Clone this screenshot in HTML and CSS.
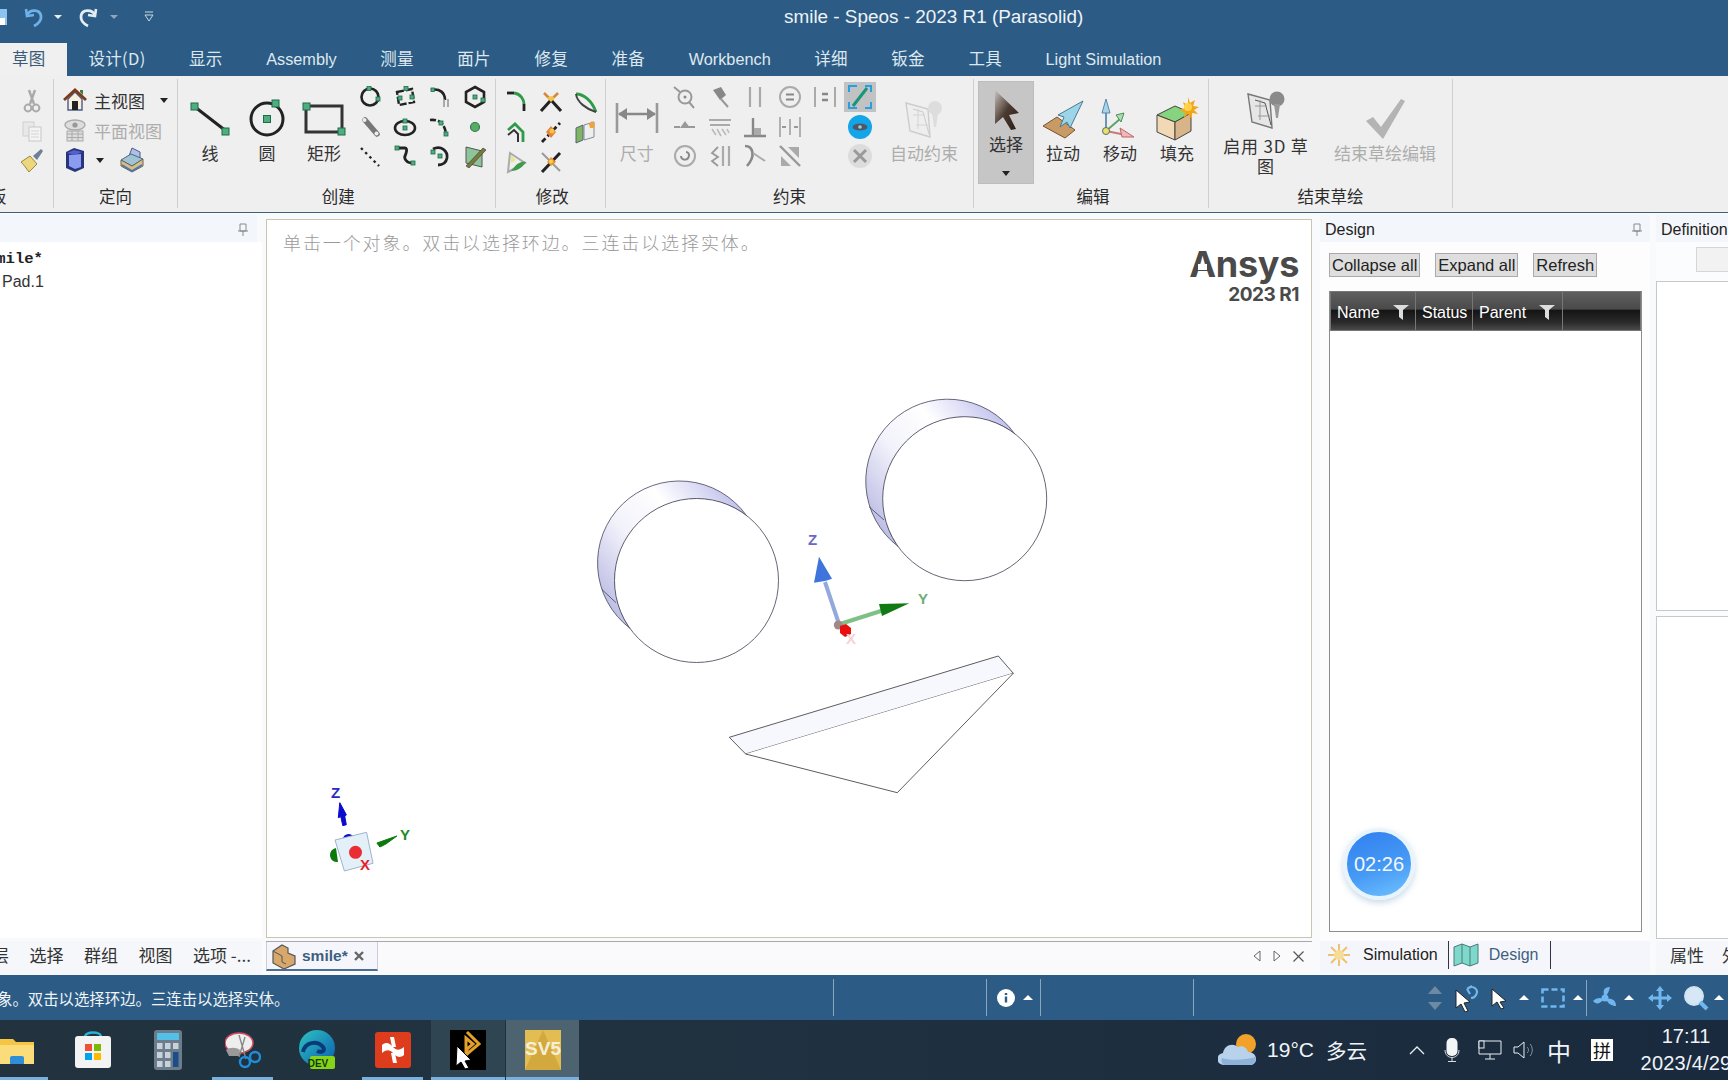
FILE: index.html
```html
<!DOCTYPE html>
<html lang="zh">
<head>
<meta charset="utf-8">
<title>smile - Speos - 2023 R1 (Parasolid)</title>
<link rel="stylesheet" href="styles.css">
</head>
<body>
<div class="app">
  <header class="titlebar">
    <div class="qat">
      <svg class="q-save" width="8" height="20" viewBox="0 0 8 20"><rect x="-8" y="2" width="15" height="16" fill="#8cc4f0"/><rect x="-2" y="11" width="7" height="7" fill="#fff"/></svg>
      <svg class="q-undo" width="24" height="24" viewBox="0 0 24 24"><path d="M4 4l1 7 7-1" fill="none" stroke="#6fb2ea" stroke-width="2.6"/><path d="M5 10c3-6 13-6 14 1 .5 5-3 8-7 10" fill="none" stroke="#6fb2ea" stroke-width="2.8"/></svg>
      <span class="q-tri"></span>
      <svg class="q-redo" width="24" height="24" viewBox="0 0 24 24"><path d="M20 4l-1 7-7-1" fill="none" stroke="#e4edf4" stroke-width="2.6"/><path d="M19 10c-3-6-13-6-14 1-.5 5 3 8 7 10" fill="none" stroke="#e4edf4" stroke-width="2.8"/></svg>
      <span class="q-tri dim"></span>
      <svg class="q-cust" width="10" height="12" viewBox="0 0 10 12"><path d="M1 1h8M1 4h8l-4 6z" fill="none" stroke="#c9d6e2" stroke-width="1"/></svg>
    </div>
    <div class="title">smile - Speos - 2023 R1 (Parasolid)</div>
  </header>

  <nav class="tabs">
    <span class="tab active">草图</span>
    <span class="tab t1">设计(D)</span>
    <span class="tab">显示</span>
    <span class="tab lat">Assembly</span>
    <span class="tab">测量</span>
    <span class="tab">面片</span>
    <span class="tab">修复</span>
    <span class="tab">准备</span>
    <span class="tab lat">Workbench</span>
    <span class="tab">详细</span>
    <span class="tab">钣金</span>
    <span class="tab">工具</span>
    <span class="tab lat">Light Simulation</span>
  </nav>

  <section class="ribbon">
    <div class="grp g-clip">
      <div class="g-body clip-col">
        <svg width="24" height="30" viewBox="0 0 24 30"><path d="M9 4l5 14M15 4l-5 14" stroke="#aaa" stroke-width="2.4" fill="none"/><circle cx="8" cy="22" r="3.4" fill="none" stroke="#aaa" stroke-width="2"/><circle cx="16" cy="22" r="3.4" fill="none" stroke="#aaa" stroke-width="2"/></svg>
        <svg width="24" height="30" viewBox="0 0 24 30"><rect x="3" y="6" width="11" height="14" fill="#e8e8e8" stroke="#d0d0d0"/><rect x="9" y="11" width="12" height="14" fill="#f4f4f4" stroke="#c8c8c8"/><path d="M11 15h8M11 18h8M11 21h8" stroke="#d4d4d4"/></svg>
        <svg width="24" height="30" viewBox="0 0 24 30"><path d="M1 16l9-6 7 8-8 8c-3-4-5-7-8-10z" fill="#ecd67e" stroke="#9a8740"/><path d="M13 10l8-7 2 2-6 9z" fill="#6f7f96"/></svg>
      </div>
      <div class="g-label clip-label">剪贴板</div>
    </div>

    <div class="grp g-orient">
      <div class="g-body orient">
        <div class="o-row">
          <svg width="24" height="24" viewBox="0 0 24 24"><path d="M5 11v11h14V11L12 4z" fill="#f6f0dc" stroke="#4a5a8c" stroke-width="1.400"/><path d="M1 12L12 2l11 10" fill="none" stroke="#7c3a1a" stroke-width="2.800"/><path d="M17 2h3v5l-3-3z" fill="#3f7a3a"/><rect x="9" y="13" width="6" height="9" fill="#222"/></svg>
          <span class="o-t">主视图</span><span class="tri o-tri"></span>
        </div>
        <div class="o-row gray">
          <svg width="24" height="24" viewBox="0 0 24 24"><ellipse cx="12" cy="7" rx="10" ry="5" fill="#ddd" stroke="#aaa" stroke-width="1.4"/><circle cx="12" cy="7" r="2.6" fill="#999"/><rect x="4" y="13" width="16" height="10" fill="#ddd" stroke="#aaa"/><path d="M4 16h16M4 19.500h16M9 13v10M15 13v10" stroke="#aaa"/></svg>
          <span class="o-t">平面视图</span>
        </div>
        <div class="o-row">
          <svg width="24" height="26" viewBox="0 0 24 26"><path d="M3 5l8-4 10 3v17l-9 4-9-4z" fill="#27347e"/><path d="M6 8l12-1v13l-6 2-6-3z" fill="#8b9cf0"/><path d="M4 6l7-3 8 2-7 3z" fill="#5262c8"/></svg>
          <span class="tri o-tri2"></span>
          <svg class="o-view" width="26" height="28" viewBox="0 0 26 28"><path d="M10 10l3-8 8 4v10l-11 0z" fill="#aebfe8" stroke="#4a5a90"/><path d="M2 14l10-6 12 5-11 7z" fill="#9fc4d8" stroke="#567"/><path d="M2 14v6l11 6 11-6v-7l-11 7z" fill="#d8bc8a" stroke="#665"/><path d="M3 19l10 6 10-6" fill="none" stroke="#4a78a8" stroke-width="1.600"/></svg>
        </div>
      </div>
      <div class="g-label">定向</div>
    </div>

    <div class="grp g-create">
      <div class="g-body row">
        <div class="big w57"><div class="bi"><svg width="44" height="44" viewBox="0 0 44 44"><path d="M7 10l31 24" stroke="#222" stroke-width="3"/><rect class="h7" x="3" y="6" width="7" height="7"/><rect class="h7" x="34" y="31" width="7" height="7"/></svg></div><span>线</span></div>
        <div class="big w57"><div class="bi"><svg width="44" height="44" viewBox="0 0 44 44"><circle cx="22" cy="22" r="16" fill="none" stroke="#222" stroke-width="3"/><rect class="h7" x="18.500" y="18.500" width="7" height="7"/><rect class="h7" x="27" y="3" width="7" height="7"/></svg></div><span>圆</span></div>
        <div class="big w57"><div class="bi"><svg width="44" height="44" viewBox="0 0 44 44"><rect x="4" y="9" width="36" height="26" fill="none" stroke="#333" stroke-width="3"/><rect class="h7" x="1" y="6" width="7" height="7"/><rect class="h7" x="36" y="31" width="7" height="7"/></svg></div><span>矩形</span></div>
        <div class="grid c4">
          <svg class="ic" viewBox="0 0 24 24"><circle cx="12" cy="12" r="8.500" fill="none" stroke="#222" stroke-width="2.600"/><rect class="h" x="9" y="1.500" width="4" height="4"/><rect class="h" x="18" y="12" width="4" height="4"/></svg>
          <svg class="ic" viewBox="0 0 24 24"><path d="M4 7l15-3 2 13-15 3z" fill="none" stroke="#222" stroke-width="2.400" stroke-dasharray="7 2"/><rect class="h" x="11" y="1.500" width="4" height="4"/><rect class="h" x="5" y="11" width="4" height="4"/><rect class="h" x="17" y="10" width="4" height="4"/></svg>
          <svg class="ic" viewBox="0 0 24 24"><path d="M3 5c9-2 14 3 14 10" fill="none" stroke="#222" stroke-width="2.600"/><path d="M16 14v8M20 14v8" stroke="#999" stroke-width="1.600"/><rect class="h" x="3" y="3" width="3.500" height="3.500"/></svg>
          <svg class="ic" viewBox="0 0 24 24"><path d="M12 2l9 5v10l-9 5-9-5V7z" fill="none" stroke="#222" stroke-width="2.600"/><rect class="h" x="10" y="10" width="4" height="4"/><rect class="h" x="18" y="13" width="4" height="4"/></svg>
          <svg class="ic" viewBox="0 0 24 24"><path d="M7 5l12 14" stroke="#777" stroke-width="5.500" stroke-linecap="round"/><circle cx="18.500" cy="18.500" r="2" fill="#eee"/><circle cx="6.500" cy="5" r="2" fill="#eee"/></svg>
          <svg class="ic" viewBox="0 0 24 24"><ellipse cx="12" cy="13" rx="10" ry="7" fill="none" stroke="#222" stroke-width="2.600"/><rect class="h" x="10" y="11" width="4" height="4"/><rect class="h" x="10" y="4" width="4" height="4"/></svg>
          <svg class="ic" viewBox="0 0 24 24"><path d="M2 5c9-1 14 3 16 13" fill="none" stroke="#222" stroke-width="2.600" stroke-dasharray="6 2"/><rect class="h" x="11" y="6" width="4" height="4"/><rect class="h" x="16" y="17" width="4" height="4"/></svg>
          <svg class="ic" viewBox="0 0 24 24"><circle cx="12" cy="12" r="4.500" fill="#5cab62" stroke="#2d7c5c" stroke-width="1.200"/></svg>
          <svg class="ic" viewBox="0 0 24 24"><path d="M3 4l18 18" stroke="#222" stroke-width="2.400" stroke-dasharray="2.500 3.500"/></svg>
          <svg class="ic" viewBox="0 0 24 24"><path d="M4 4h8c3 0 1 6 0 8s1 7 7 7" fill="none" stroke="#222" stroke-width="2.800"/><rect class="h" x="2" y="2" width="4" height="4"/><rect class="h" x="18" y="17" width="4" height="4"/></svg>
          <svg class="ic" viewBox="0 0 24 24"><path d="M5 5c8-4 15 2 14 9-1 5-5 7-9 7" fill="none" stroke="#222" stroke-width="2.800"/><rect class="h" x="3" y="6" width="4" height="4"/><rect class="h" x="10" y="10" width="4" height="4"/></svg>
          <svg class="ic" viewBox="0 0 24 24"><path d="M3 3l16 4v16L3 19z" fill="#8ec49a" stroke="#555"/><path d="M3 22L20 4l3 2L6 24z" fill="#7a7a3a" stroke="#333" stroke-width=".6"/></svg>
        </div>
      </div>
      <div class="g-label">创建</div>
    </div>

    <div class="grp g-mod">
      <div class="g-body">
        <div class="grid c3 r30">
          <svg class="ic" viewBox="0 0 24 24"><path d="M2 3h7" stroke="#222" stroke-width="2.800"/><path d="M9 3c7 1 10 7 10 11" fill="none" stroke="#2f9b4a" stroke-width="2.800"/><path d="M19 14v7" stroke="#222" stroke-width="2.800"/></svg>
          <svg class="ic" viewBox="0 0 24 24"><path d="M2 21l10-11 10 11" fill="none" stroke="#222" stroke-width="3"/><path d="M5 3l7 7 7-7" fill="none" stroke="#d8873b" stroke-width="2.600"/><path d="M8 8l4 4 4-4-4-2z" fill="#f4c44a"/></svg>
          <svg class="ic" viewBox="0 0 24 24"><path d="M2 4c8 0 16 7 20 18" fill="none" stroke="#2f9b4a" stroke-width="2.800"/><path d="M2 4c1 8 10 15 20 18" fill="none" stroke="#444" stroke-width="2"/></svg>
          <svg class="ic" viewBox="0 0 24 24"><path d="M3 10l7-6 8 8v10" fill="none" stroke="#2f9b4a" stroke-width="2.800"/><path d="M3 15l6-5 4 4v8" fill="none" stroke="#333" stroke-width="2"/></svg>
          <svg class="ic" viewBox="0 0 24 24"><path d="M3 22L21 3" stroke="#222" stroke-width="2.800" stroke-dasharray="5 3"/><path d="M7 12l5 6 5-6-5-6z" fill="#e6823a"/><circle cx="13" cy="11" r="2.500" fill="#f4c44a"/></svg>
          <svg class="ic" viewBox="0 0 24 24"><path d="M2 8l7-3v15l-7 3z" fill="#7fb563" stroke="#567"/><path d="M10 5l10-3v15l-10 3z" fill="#eee" stroke="#889"/><path d="M15 4l3-3 3 3-1 4-4 0z" fill="#eda43c"/></svg>
          <svg class="ic" viewBox="0 0 24 24"><path d="M5 3l15 10L3 22z" fill="none" stroke="#aaa" stroke-width="2"/><path d="M6 5l5 5-5 3z" fill="#e8e68a"/><path d="M6 21c6-8 10-10 15-9-4 6-9 9-15 9z" fill="#3f9b4c"/></svg>
          <svg class="ic" viewBox="0 0 24 24"><path d="M3 22L21 3" stroke="#222" stroke-width="3"/><path d="M3 3l18 18" stroke="#999" stroke-width="2"/><path d="M8 12l4-5 5 5-5 4z" fill="#ef8e30"/><circle cx="12" cy="11.500" r="2" fill="#f6d34a"/></svg>
        </div>
      </div>
      <div class="g-label">修改</div>
    </div>

    <div class="grp g-cons">
      <div class="g-body row">
        <div class="big w61 gray"><div class="bi"><svg width="44" height="44" viewBox="0 0 44 44"><path d="M2 6v30M42 6v30" stroke="#999" stroke-width="2.600"/><path d="M4 17h36" stroke="#888" stroke-width="2.600"/><path d="M3 17l9-6v12zM41 17l-9-6v12z" fill="#888"/></svg></div><span>尺寸</span></div>
        <div class="grid c6 cons">
          <svg class="ic" viewBox="0 0 24 24"><circle cx="12" cy="12" r="6.500" fill="none" stroke="#999" stroke-width="2"/><circle cx="12" cy="12" r="1.500" fill="#888"/><path d="M1 2l6 5M16 17l5 6" stroke="#999" stroke-width="2"/></svg>
          <svg class="ic" viewBox="0 0 24 24"><path d="M5 5l8-3 5 8-6 5z" fill="#888"/><path d="M13 14l7 8" stroke="#999" stroke-width="2"/></svg>
          <svg class="ic" viewBox="0 0 24 24"><path d="M7 2v20M17 2v20" stroke="#aaa" stroke-width="2.200"/></svg>
          <svg class="ic" viewBox="0 0 24 24"><circle cx="12" cy="12" r="10" fill="none" stroke="#aaa" stroke-width="2"/><path d="M8 9.500h8M8 14.500h8" stroke="#888" stroke-width="2.200"/></svg>
          <svg class="ic" viewBox="0 0 24 24"><path d="M2 2v20M22 2v20" stroke="#aaa" stroke-width="2"/><path d="M9 9h6M9 15h6" stroke="#888" stroke-width="2.400"/></svg>
          <svg class="ic act" viewBox="0 0 32 30"><rect width="32" height="30" fill="#c1c2c4"/><path d="M5 10V4h8M27 10V4h-6M5 20v6h8M27 20v6h-6" fill="none" stroke="#2a9fe0" stroke-width="2"/><path d="M9 24L23 6" stroke="#17967a" stroke-width="3"/></svg>

          <svg class="ic" viewBox="0 0 24 24"><path d="M1 12h22" stroke="#999" stroke-width="2" stroke-dasharray="6 3 12 3"/><path d="M12 6l5 7H7z" fill="#999"/></svg>
          <svg class="ic" viewBox="0 0 24 24"><path d="M1 5h22M2 10h20" stroke="#aaa" stroke-width="2.200"/><path d="M4 14l4 6M9 14l4 7M14 14l4 6M19 14l2 4" stroke="#bbb" stroke-width="1.600"/></svg>
          <svg class="ic" viewBox="0 0 24 24"><path d="M1 21h22M10 3v18" stroke="#888" stroke-width="2.400"/><rect x="11" y="13" width="7" height="7" fill="#aaa"/></svg>
          <svg class="ic" viewBox="0 0 24 24"><path d="M2 2v20M22 2v20M12 4v16" stroke="#aaa" stroke-width="1.800"/><path d="M4 12h4M16 12h4" stroke="#999" stroke-width="1.800"/></svg>
          <span class="ic"></span>
          <svg class="ic" viewBox="0 0 24 24"><circle cx="12" cy="12" r="12" fill="#12a6e8"/><ellipse cx="12" cy="12" rx="7.500" ry="3.600" fill="#4d5966"/><circle cx="12" cy="12" r="1.800" fill="#b4c4d4"/></svg>

          <svg class="ic" viewBox="0 0 24 24"><circle cx="12" cy="12" r="10" fill="none" stroke="#aaa" stroke-width="2"/><path d="M8 12c0 5 8 5 8-1 0-2-2-3-3-3" fill="none" stroke="#888" stroke-width="2"/></svg>
          <svg class="ic" viewBox="0 0 24 24"><path d="M15 2v20M21 2v20" stroke="#aaa" stroke-width="2.200"/><path d="M10 3L4 9l6 4-6 4 6 5" fill="none" stroke="#999" stroke-width="1.800"/></svg>
          <svg class="ic" viewBox="0 0 24 24"><path d="M2 2c8 0 11 10 2 20" fill="none" stroke="#888" stroke-width="2.600"/><path d="M10 9l12 8" stroke="#aaa" stroke-width="2"/></svg>
          <svg class="ic" viewBox="0 0 24 24"><path d="M2 2l20 20" stroke="#999" stroke-width="2.400"/><path d="M10 3h11v11zM3 12v10h10z" fill="#aaa"/></svg>
          <span class="ic"></span>
          <svg class="ic" viewBox="0 0 24 24"><circle cx="12" cy="12" r="12" fill="#dcdcdc"/><path d="M6 6l12 12M18 6L6 18" stroke="#999" stroke-width="3"/></svg>
        </div>
        <div class="big w93 gray"><div class="bi"><svg width="44" height="44" viewBox="0 0 44 44"><path d="M4 6l22 6 2 28L8 34z" fill="#eee" stroke="#ccc" stroke-width="1.400"/><path d="M11 12l10 3 6 22" fill="none" stroke="#ccc"/><path d="M11 18h12M14 28h12M16 12v20" stroke="#d4d4d4"/><circle cx="33" cy="11" r="7" fill="#ddd"/><path d="M30 16h6l-2 14h-2z" fill="#ddd"/></svg></div><span>自动约束</span></div>
      </div>
      <div class="g-label">约束</div>
    </div>

    <div class="grp g-edit">
      <div class="g-body row">
        <div class="sel">
          <svg width="34" height="42" viewBox="0 0 34 42"><defs><linearGradient id="arw" x1="0" y1="0" x2="1" y2="1"><stop offset="0" stop-color="#c9c3bd"/><stop offset=".5" stop-color="#4a3a30"/><stop offset="1" stop-color="#2a1a14"/></linearGradient></defs><path d="M6 1l24 23-10 2 7 14-5 1-8-13-8 7z" fill="url(#arw)"/></svg>
          <span>选择</span>
          <i class="tri"></i>
        </div>
        <div class="big w57"><div class="bi"><svg width="44" height="44" viewBox="0 0 44 44"><path d="M2 29l14-9 18 13-10 8z" fill="#c89a66" stroke="#77532d"/><path d="M42 4L17 18l6 2-4 10 7-5 3 6z" fill="#9cd4e8" stroke="#4a7b92"/></svg></div><span>拉动</span></div>
        <div class="big w57"><div class="bi"><svg width="44" height="44" viewBox="0 0 44 44"><path d="M8 34V12" stroke="#6a95b8" stroke-width="2"/><path d="M8 2l-4 14h8z" fill="#a8d4e8" stroke="#5a87a8"/><path d="M8 34l14-12" stroke="#5fa36a" stroke-width="2"/><path d="M26 16l-8 2 5 7z" fill="#a7e0ae" stroke="#4c8f5a"/><path d="M8 34l20 4" stroke="#c77" stroke-width="2"/><path d="M36 40l-14-9 2 9z" fill="#f0b8bc" stroke="#b66"/><circle cx="8" cy="34" r="3.500" fill="#e6e26a" stroke="#666"/></svg></div><span>移动</span></div>
        <div class="big w57"><div class="bi"><svg width="44" height="44" viewBox="0 0 44 44"><path d="M2 18l18-9 16 7-16 9z" fill="#86d47d" stroke="#444"/><path d="M2 18v17l18 8V25z" fill="#f0d9b4" stroke="#444"/><path d="M20 25v18l16-9V16z" fill="#d8b489" stroke="#444"/><path d="M33 0l2 6 5-3-2 6 6 1-5 3 4 4-6-1v6l-4-5-4 4 1-6-6-2 6-2-2-6 5 3z" fill="#f2a516"/><circle cx="33" cy="10" r="4" fill="#ffd24a"/></svg></div><span>填充</span></div>
      </div>
      <div class="g-label">编辑</div>
    </div>

    <div class="grp g-end">
      <div class="g-body row">
        <div class="big w114 two"><div class="bi"><svg width="44" height="44" viewBox="0 0 44 44"><path d="M4 6l22 6 2 28L8 34z" fill="#e6e6e6" stroke="#777" stroke-width="1.400"/><path d="M11 12l10 3 6 22" fill="none" stroke="#555"/><path d="M11 18h12M14 28h12M16 12v20" stroke="#999"/><circle cx="33" cy="11" r="7.500" fill="#8a8a8a"/><path d="M30 16h6l-2 14h-2z" fill="#999"/></svg></div><span>启用 3D 草<br>图</span></div>
        <div class="big w124 gray"><div class="bi"><svg width="44" height="44" viewBox="0 0 44 44"><path d="M3 24l7-4 8 10L38 2l4 2-22 38z" fill="#b4b4b4"/></svg></div><span>结束草绘编辑</span></div>
      </div>
      <div class="g-label">结束草绘</div>
    </div>
  </section>

  <main class="main">
    <aside class="col left">
      <div class="phead"><span></span><svg class="pin" width="12" height="14" viewBox="0 0 12 14"><path d="M3 1h6v7H3zM1 8h10M6 8v5" fill="none" stroke="#888"/></svg></div>
      <div class="tree">
        <div class="t-root">smile*</div>
        <div class="t-pad">Pad.1</div>
      </div>
      <div class="strip l-strip"><span class="cut">图层</span><span>选择</span><span>群组</span><span>视图</span><span>选项 -...</span></div>
    </aside>

    <section class="col center">
      <div class="viewport">
        <svg class="scene" width="1044" height="717" viewBox="267 220 1044 717">
          <defs>
            <linearGradient id="cres" x1="1" y1=".1" x2="0" y2=".9"><stop offset="0" stop-color="#b4b4e6"/><stop offset=".18" stop-color="#dcdcf6"/><stop offset=".36" stop-color="#fff"/><stop offset=".62" stop-color="#f2f2fb"/><stop offset="1" stop-color="#b2b2e0"/></linearGradient>
          </defs>
          <g fill="url(#cres)" stroke="#44445a" stroke-width=".8">
            <path d="M746.400 515.500A82 82 0 1 0 630.100 628.400A82 82 0 0 1 746.400 515.500z"/>
            <path d="M1014.600 433.700A82 82 0 1 0 898.300 546.600A82 82 0 0 1 1014.600 433.700z"/>
          </g>
          <g fill="#fff" stroke="#3e3e50" stroke-width=".8">
            <circle cx="696.500" cy="580.500" r="82"/>
            <circle cx="964.700" cy="498.700" r="82"/>
          </g>
          <path d="M601.700 589.300L616 602.700M869 506.700L884 520" stroke="#44445a" stroke-width=".8" fill="none"/>
          <path d="M729.300 737.300L998.300 656 1013.300 673.300 745.700 754z" fill="#f7f7fe" stroke="#333" stroke-width=".8"/>
          <path d="M745.700 754L897.300 792.700 1013.300 673.300" fill="#fff" stroke="#333" stroke-width=".8"/>

          <path d="M839 624L825 582" stroke="#93a9dc" stroke-width="4"/>
          <path d="M819 556.700l-5 26 12-2 6-2z" fill="#3f74dc"/>
          <path d="M840 624l44-14" stroke="#7fc087" stroke-width="4"/>
          <path d="M909.300 603.300l-30.300 .7 3 12z" fill="#127a12"/>
          <circle cx="838.300" cy="625" r="4.500" fill="#a08a88"/>
          <path d="M840 626l6-2 5 4v6l-6 3-5-4z" fill="#e90f0f"/>
          <text class="ax" x="808" y="545" fill="#6c68c4">Z</text>
          <text class="ax" x="918" y="604" fill="#70ac78">Y</text>
          <text class="ax" x="846" y="644" fill="#f6d3d3">X</text>

          <path d="M348.600 834a6 6 0 0 1 6 6h-12a6 6 0 0 1 6-6z" fill="#0a0ad0"/>
          <path d="M336 848a7 7 0 0 0 2 14z" fill="#0b7a0b"/>
          <path d="M335 840l31.600-7.700L373 863.300 344.400 871z" fill="#e4f0f8" stroke="#9db4d0"/>
          <circle cx="355.500" cy="852.300" r="6.500" fill="#ea2c34"/>
          <path d="M339.800 802.700l6.500 12-1.500 2 1.500 8-3.500 1-2-9-2.500 1z" fill="#0a0ad0" stroke="#0a0ad0"/>
          <path d="M396.900 836l-20 7 3 4 6-3z" fill="#0b7a0b" stroke="#0b7a0b"/>
          <text class="ax" x="331" y="798" fill="#2a2ac0">Z</text>
          <text class="ax" x="400" y="840" fill="#1f8a2a">Y</text>
          <text class="ax" x="360" y="870" fill="#e9202a">X</text>
        </svg>
        <div class="hint">单击一个对象。双击以选择环边。三连击以选择实体。</div>
        <div class="logo"><div class="logo-a">Ansys</div><div class="logo-b">2023 R1</div></div>
      </div>
      <div class="strip doc-strip">
        <div class="doc-tab">
          <svg width="26" height="26" viewBox="0 0 26 26"><path d="M2 8l9-6 6 3v5l7 3v8l-11 5-11-6z" fill="#d8a76c" stroke="#555" stroke-width="1.200"/><path d="M2 8l9 5v6l4 2" fill="none" stroke="#555"/></svg>
          <span class="d-name">smile*</span>
          <svg width="12" height="12" viewBox="0 0 12 12"><path d="M2 2l8 8M10 2l-8 8" stroke="#666" stroke-width="2.400"/></svg>
        </div>
        <div class="doc-nav">
          <svg width="10" height="14" viewBox="0 0 10 14"><path d="M8 2L2 7l6 5z" fill="none" stroke="#666"/></svg>
          <svg width="10" height="14" viewBox="0 0 10 14"><path d="M2 2l6 5-6 5z" fill="none" stroke="#666"/></svg>
          <svg width="13" height="13" viewBox="0 0 13 13"><path d="M1.500 1.500l10 10M11.500 1.500l-10 10" stroke="#555" stroke-width="1.200"/></svg>
        </div>
      </div>
    </section>

    <section class="col design">
      <div class="phead d-head"><span>Design</span><svg class="pin" width="12" height="14" viewBox="0 0 12 14"><path d="M3 1h6v7H3zM1 8h10M6 8v5" fill="none" stroke="#888"/></svg></div>
      <div class="d-body">
        <div class="d-btns"><button class="btn">Collapse all</button><button class="btn">Expand all</button><button class="btn">Refresh</button></div>
        <div class="d-box">
          <div class="thead">
            <div class="th w-name">Name<svg class="flt" width="18" height="18" viewBox="0 0 18 18"><path d="M1 2h16l-6 5v10l-4-3V7z" fill="#ddd"/></svg></div>
            <div class="th w-status">Status</div>
            <div class="th w-parent">Parent<svg class="flt" width="18" height="18" viewBox="0 0 18 18"><path d="M1 2h16l-6 5v10l-4-3V7z" fill="#ddd"/></svg></div>
            <div class="th w-rest"></div>
          </div>
          <div class="timer">02:26</div>
        </div>
      </div>
      <div class="strip d-strip">
        <svg width="24" height="24" viewBox="0 0 24 24"><g stroke="#ecc270" stroke-width="2"><path d="M12 1v22M1 12h22M4 4l16 16M20 4L4 20"/></g><circle cx="12" cy="12" r="5" fill="#f6dc94"/></svg>
        <span class="s-sim">Simulation</span>
        <svg class="s-map" width="26" height="24" viewBox="0 0 26 24"><path d="M1 4l8-3 8 3 8-3v19l-8 3-8-3-8 3z" fill="#7fd8cc" stroke="#4a7a78"/><path d="M9 1v19M17 4v19" stroke="#4a7a78"/></svg>
        <span class="s-des">Design</span>
      </div>
    </section>

    <aside class="col def">
      <div class="phead e-head">Definition</div>
      <div class="e-body">
        <div class="e-btn"></div>
        <div class="e-box one"></div>
        <div class="e-box two"></div>
      </div>
      <div class="strip e-strip"><span>属性</span><span>外观</span></div>
    </aside>
  </main>

  <footer class="status">
    <div class="st-text">象。双击以选择环边。三连击以选择实体。</div>
    <div class="st-cell c1"></div>
    <div class="st-cell c2"><svg width="18" height="18" viewBox="0 0 18 18"><circle cx="9" cy="9" r="9" fill="#fff"/><path d="M9 7.500v6M9 4v2" stroke="#2c5c85" stroke-width="2.400"/></svg><span class="up"></span></div>
    <div class="st-cell c3"></div>
    <div class="st-tools">
      <svg class="t-sp" width="16" height="28" viewBox="0 0 16 28"><path d="M8 2l7 8H1zM8 26l7-8H1z" fill="#6e8aa3"/></svg>
      <svg class="t-a" width="26" height="28" viewBox="0 0 26 28"><path d="M2 6l14 12-6 1 4 8-3 1-4-8-5 4z" fill="#fff" stroke="#222"/><path d="M14 4c6-3 11 2 8 7-1 2-3 3-5 3M13 5l5-3M13 5l3 5" fill="none" stroke="#6fb7ee" stroke-width="2.200"/></svg>
      <svg class="t-b" width="18" height="24" viewBox="0 0 18 24"><path d="M2 3l14 12-6 1 4 6-3 1-4-7-5 4z" fill="#fff" stroke="#222"/></svg>
      <span class="up"></span>
      <svg class="t-c" width="24" height="20" viewBox="0 0 24 20"><rect x="1.500" y="1.500" width="21" height="17" fill="none" stroke="#6fb7ee" stroke-width="2.600" stroke-dasharray="6 3"/></svg>
      <span class="up"></span>
      <span class="t-sep"></span>
      <svg class="t-d" width="26" height="26" viewBox="0 0 26 26"><circle cx="13" cy="13" r="3.500" fill="#6fb7ee"/><path d="M13 12C10 6 12 2 18 2c-1 4-2 7-5 10zM14 14c6-1 10 1 10 7-4 0-8-2-10-7zM12 14c-4 5-8 6-11 2 3-3 7-4 11-2z" fill="#6fb7ee"/></svg>
      <span class="up"></span>
      <svg class="t-e" width="24" height="24" viewBox="0 0 24 24"><path d="M12 2v20M2 12h20" stroke="#6fb7ee" stroke-width="3"/><path d="M12 0l4 5H8zM12 24l4-5H8zM0 12l5-4v8zM24 12l-5-4v8z" fill="#6fb7ee"/></svg>
      <svg class="t-f" width="26" height="26" viewBox="0 0 26 26"><circle cx="11" cy="11" r="9" fill="#d6e8f6" stroke="#cfe3f2" stroke-width="2"/><path d="M17 17l7 7" stroke="#6fb7ee" stroke-width="4"/></svg>
      <span class="up"></span>
    </div>
  </footer>

  <div class="taskbar">
    <div class="tk">
      <div class="tb on w48"><svg width="34" height="30" viewBox="0 0 34 30"><path d="M0 4h13l3 3h18v22H0z" fill="#f6c544"/><path d="M0 10h34v19H0z" fill="#fbdc7a"/><path d="M10 29v-6a2 2 0 0 1 2-2h10a2 2 0 0 1 2 2v6" fill="#2f8ed8"/></svg></div>
      <div class="tb w75"><svg width="36" height="38" viewBox="0 0 36 38"><path d="M10 6c0-6 16-6 16 0" fill="none" stroke="#2bb0d8" stroke-width="2.400"/><rect y="5" width="36" height="32" rx="3" fill="#f3f3f3"/><rect x="10" y="13" width="7" height="7" fill="#f05033"/><rect x="19" y="13" width="7" height="7" fill="#7db900"/><rect x="10" y="22" width="7" height="7" fill="#00a3ee"/><rect x="19" y="22" width="7" height="7" fill="#ffb900"/></svg></div>
      <div class="tb w75"><svg width="28" height="40" viewBox="0 0 28 40"><rect width="28" height="40" rx="3" fill="#6b7c8b"/><rect x="3" y="3" width="22" height="7" fill="#54c0e8"/><g fill="#c9d2da"><rect x="3" y="13" width="5.500" height="6"/><rect x="11" y="13" width="5.500" height="6"/><rect x="19" y="13" width="5.500" height="6"/><rect x="3" y="22" width="5.500" height="6"/><rect x="11" y="22" width="5.500" height="6"/><rect x="3" y="31" width="5.500" height="6"/><rect x="11" y="31" width="5.500" height="6"/></g><rect x="19" y="22" width="5.500" height="15" fill="#1d4d88"/></svg></div>
      <div class="tb on inset w75"><svg width="36" height="38" viewBox="0 0 36 38"><ellipse cx="14" cy="12" rx="14" ry="10" fill="#eee" stroke="#d04a60" stroke-width="1.500"/><path d="M1 19c4-3 10-3 14 0l-1 6H4z" fill="#999"/><path d="M14 4l7 24M20 6L14 26" stroke="#888" stroke-width="1.400"/><circle cx="20" cy="31" r="5" fill="none" stroke="#1e8ed8" stroke-width="2.400"/><circle cx="30" cy="26" r="5" fill="none" stroke="#1e8ed8" stroke-width="2.400"/></svg></div>
      <div class="tb w75"><svg width="38" height="40" viewBox="0 0 38 40"><defs><linearGradient id="edg" x1="0" y1="0" x2="1" y2="1"><stop offset="0" stop-color="#2ec4c0"/><stop offset="1" stop-color="#0a5cb0"/></linearGradient></defs><circle cx="18" cy="18" r="18" fill="url(#edg)"/><path d="M4 22c2-10 14-12 20-5 3 4-2 6-6 4" fill="none" stroke="#0b3a7a" stroke-width="4"/><rect x="11" y="26" width="25" height="13" rx="2" fill="#86d41a"/></svg><span class="dev">DEV</span></div>
      <div class="tb on inset w75"><svg width="36" height="36" viewBox="0 0 36 36"><rect width="36" height="36" rx="3" fill="#dd3d1d"/><path d="M7 13c5-4 8-1 11 2 3 3 6 4 11 0v8c-5 4-8 1-11-2-3-3-6-4-11 0z" fill="#fff"/><path d="M15 5l4 0 2 10-4 0zM16 21l4 0 2 10-4 0z" fill="#fff"/></svg></div>
      <div class="tb on tile w-t1"><svg width="36" height="40" viewBox="0 0 36 40"><rect width="36" height="40" fill="#000"/><path d="M17 2l12 12-12 10v-5l6-5-7-6v18" fill="none" stroke="#e3a02a" stroke-width="3"/><path d="M7 16l14 14-6 1 4 7-4 1-4-7-5 4z" fill="#fff" stroke="#000"/></svg></div>
      <div class="tb on tile2 w-t2"><svg width="36" height="40" viewBox="0 0 36 40"><rect width="36" height="40" fill="#e3bc52"/><path d="M18 0l18 40H0z" fill="#d3a93e"/></svg><span class="sv5">SV5</span></div>
    </div>
    <div class="tray">
      <svg class="cloud" width="40" height="34" viewBox="0 0 40 34"><circle cx="28" cy="11" r="10" fill="#f2a22a"/><path d="M6 32a6 6 0 0 1-1-12c1-7 9-11 15-6 5-2 9 1 10 5 5 0 8 3 8 7s-3 6-6 6z" fill="#b8d2ec"/><path d="M6 32a6 6 0 0 1-2-7c8 3 24 2 33-1 2 4-1 8-5 8z" fill="#8fb2d8"/></svg>
      <span class="temp">19°C</span>
      <span class="wx">多云</span>
      <svg class="caret" width="16" height="10" viewBox="0 0 16 10"><path d="M1 9l7-7 7 7" fill="none" stroke="#e8eef4" stroke-width="1.300"/></svg>
      <svg class="mic" width="16" height="24" viewBox="0 0 16 24"><rect x="2.500" y="0" width="11" height="18" rx="5" fill="#f2f4f6"/><path d="M1 12c0 10 14 10 14 0M8 19v4M4 23.500h8" fill="none" stroke="#d8dde2"/></svg>
      <svg class="net" width="24" height="20" viewBox="0 0 24 20"><path d="M1 1h22v13H1zM12 14v5M7 19h10" fill="none" stroke="#e8eef4"/><rect x="1" y="1" width="5" height="7" fill="#1b2a3e" stroke="#e8eef4"/></svg>
      <svg class="vol" width="22" height="20" viewBox="0 0 22 20"><path d="M1 7h4l6-5v16l-6-5H1z" fill="none" stroke="#e8eef4"/><path d="M14 7c2 2 2 4 0 6M17 4c3 3 3 9 0 12" fill="none" stroke="#8b97a4"/></svg>
      <span class="ime">中</span>
      <span class="pin-yin">拼</span>
      <div class="clock"><div>17:11</div><div class="date">2023/4/29</div></div>
    </div>
  </div>
</div>
</body>
</html>
```
FILE: styles.css
```css
* { box-sizing: border-box; }
html, body { margin: 0; padding: 0; width: 1728px; height: 1080px; overflow: hidden; }
body { font-family: "Liberation Sans", "Noto Sans CJK SC", sans-serif; color: #222; background: #fff; }
.app { width: 1728px; height: 1080px; display: flex; flex-direction: column; overflow: hidden; }

/* title */
.titlebar { height: 43px; background: #2c5c85; display: flex; align-items: center; position: relative; flex: none; }
.qat { display: flex; align-items: center; height: 34px; margin-top: -9px; }
.q-save { margin-right: 14px; }
.q-undo { margin-right: 8px; margin-left: 0; }
.q-tri { width: 0; height: 0; border-left: 4px solid transparent; border-right: 4px solid transparent; border-top: 4px solid #e8eef4; margin-right: 14px; }
.q-tri.dim { border-top-color: #8ea6ba; margin-left: 1px; margin-right: 26px; }
.q-redo { margin-right: 9px; }
.title { position: absolute; left: 784px; top: 6px; font-size: 18.900px; line-height: 22px; color: #eef3f7; white-space: nowrap; }

/* tabs */
.tabs { height: 33px; background: #2c5c85; display: flex; align-items: center; gap: 43.500px; flex: none; color: #dfe8ef; font-family: "Noto Sans CJK SC", "Liberation Sans", sans-serif; font-size: 16.500px; }
.tab { height: 33px; line-height: 31px; white-space: nowrap; letter-spacing: .3px; }
.tab.lat { font-family: "Liberation Sans", sans-serif; font-size: 16.300px; letter-spacing: 0; padding-top: 1px; }
.tab.t1 { margin-left: -22px; }
.tab.active { background: #f0f0f0; color: #3a5a78; width: 67px; padding-left: 12px; }

/* ribbon */
.ribbon { height: 137px; background: #efefef; display: flex; padding-top: 3px; border-bottom: 1px solid #3f6078; flex: none; font-family: "Noto Sans CJK SC", "Liberation Sans", sans-serif; font-size: 17px; color: #333; }
.grp { height: 129px; display: flex; flex-direction: column; border-right: 1px solid #cfcfcf; flex: none; overflow: hidden; }
.g-body { height: 105px; flex: none; }
.g-body.row { display: flex; }
.g-label { height: 24px; line-height: 24px; text-align: center; font-size: 16.500px; color: #2b2b2b; white-space: nowrap; }
.g-clip { width: 54px; }
.g-orient { width: 124px; }
.g-create { width: 318px; padding-left: 3.500px; }
.g-mod { width: 110px; padding-left: 3.500px; }
.g-cons { width: 368px; }
.g-edit { width: 235px; padding-left: 4px; }
.g-end { width: 244px; }
.clip-col { display: flex; flex-direction: column; padding: 7px 0 0 20px; gap: 0; }
.clip-label { margin-left: -43px; text-align: left; width: 60px; }

.orient { padding: 6px 0 0 9px; display: flex; flex-direction: column; }
.o-row { height: 30px; display: flex; align-items: center; gap: 7px; white-space: nowrap; }
.o-row .o-t { font-size: 17px; color: #333; }
.gray, .gray span, .o-row.gray .o-t { color: #adadad; }
.tri { display: inline-block; width: 0; height: 0; border-left: 4.500px solid transparent; border-right: 4.500px solid transparent; border-top: 5px solid #222; }
.o-tri { margin-left: 8px; }
.o-tri2 { margin-left: 2px; }
.o-view { margin-left: 8px; }

.big { display: flex; flex-direction: column; align-items: center; flex: none; }
.bi { height: 44px; margin-top: 18px; display: flex; align-items: center; justify-content: center; }
.big span { line-height: 24px; white-space: nowrap; }
.w57 { width: 57px; }
.w61 { width: 61.500px; }
.w93 { width: 93px; }
.w114 { width: 114px; }
.w124 { width: 124px; }
.two .bi { margin-top: 9px; }
.two span { line-height: 20px; text-align: center; margin-top: 4px; letter-spacing: .8px; }

.grid { display: grid; grid-auto-rows: 29.500px; padding-top: 3.500px; justify-items: center; align-items: center; }
.c4 { grid-template-columns: repeat(4, 35px); }
.c3 { grid-template-columns: repeat(3, 34.500px); }
.c6 { grid-template-columns: repeat(6, 35px); }
.r30 { grid-auto-rows: 30px; padding-top: 8px; }
.ic { width: 24px; height: 24px; display: block; }
.ic.act { width: 32px; height: 30px; }
.h7 { fill: #4fae7e; stroke: #1d6b4c; stroke-width: 1; }
.h { fill: #4fae7e; stroke: #1d6b4c; stroke-width: .8; }

.sel { width: 56px; height: 103px; margin-top: 2px; background: #c6c6c6; border: 1px solid #bdbdbd; display: flex; flex-direction: column; align-items: center; padding-top: 7px; margin-right: .5px; flex: none; }
.sel span { line-height: 24px; margin-top: 1px; }
.sel i { margin-top: 15px; }

/* main */
.main { flex: 1; min-height: 0; display: flex; background: #f9fafc; }
.col { display: flex; flex-direction: column; flex: none; height: 762px; overflow: hidden; }
.left { width: 262px; }
.center { width: 1054px; padding: 0 4px; }
.design { width: 336px; padding: 0 2px 0 4px; }
.def { width: 76px; padding-left: 4px; }
.phead { height: 27px; margin-top: 2px; background: #f3f6fb; display: flex; align-items: center; justify-content: space-between; font-size: 16px; flex: none; padding: 2px 8px 0 6px; color: #222; white-space: nowrap; }
.left .phead { width: 257px; }
.pin { flex: none; }
.tree { height: 696px; flex: none; background: #fff; font-size: 16px; padding-top: 5px; }
.t-root { font-family: "Liberation Mono", monospace; font-weight: 700; font-size: 15.500px; line-height: 24px; margin-left: -13px; }
.t-pad { line-height: 22px; margin-left: 2px; color: #333; }
.strip { height: 34px; flex: none; background: #f5f7fb; display: flex; align-items: center; margin-top: auto; white-space: nowrap; }
.l-strip { font-family: "Noto Sans CJK SC", sans-serif; font-size: 17px; gap: 20.500px; color: #333; padding-bottom: 7px; }
.l-strip .cut { margin-left: -25px; }

.viewport { height: 719px; margin-top: 6px; margin-bottom: 3px; border: 1px solid #c8c5b0; background: #fff; position: relative; flex: none; overflow: hidden; }
.scene { position: absolute; left: 0; top: 0; display: block; }
.ax { font-family: "Liberation Sans", sans-serif; font-weight: 700; font-size: 15px; }
.hint { position: relative; margin: 10px 0 0 16px; font-family: "Noto Sans CJK SC", sans-serif; font-weight: 300; font-size: 18px; line-height: 24px; letter-spacing: 1.900px; color: #9a9a9a; white-space: nowrap; }
.logo { position: absolute; right: 12px; top: 26px; text-align: right; color: #4a4a4a; font-family: Inter, sans-serif; font-weight: 700; }
.logo-a { display: inline-block; position: relative; font-size: 36px; line-height: 36px; letter-spacing: -.3px; vertical-align: top; }
.logo-a::after { content: ""; position: absolute; left: 9px; top: 18px; width: 9px; height: 6px; background: #fff; }
.logo-b { font-size: 19px; line-height: 19px; margin-top: 3px; letter-spacing: -.5px; }
.doc-strip { border-top: 1px solid #a9a9a9; background: #fafafc; justify-content: space-between; }
.doc-tab { width: 112px; height: 29px; margin-left: 0; border: 1px solid #ccd; border-top: 0; border-bottom: 2px solid #4a6f92; background: #f5f6fb; display: flex; align-items: center; gap: 5px; padding-left: 4px; align-self: flex-start; }
.d-name { font-weight: 700; font-size: 15.500px; color: #3f5f7f; }
.doc-nav { display: flex; gap: 10px; align-items: center; padding-right: 7px; margin-top: -5px; }

.design .phead { padding-left: 5px; padding-right: 7px; }
.d-body { flex: none; height: 699px; background: #fdfdfe; padding: 11px 0 0 9px; }
.d-btns { display: flex; gap: 15px; height: 24px; }
.btn { height: 24px; padding: 0 2px; margin: 0; border: 1px solid #aaa; background: #dedede; font: 16.500px/20px "Liberation Sans", sans-serif; color: #222; }
.d-box { margin-top: 14px; width: 313px; height: 641px; border: 1px solid #8c8c8c; background: #fff; position: relative; }
.thead { height: 40px; display: flex; margin-top: -1px; padding: 1px 1px 0; background: #777; }
.th { height: 38px; display: flex; align-items: center; color: #fff; font-size: 16px; padding: 4px 0 0 6px; background: linear-gradient(#5e5e5e 0%, #4a4a4a 45%, #141414 48%, #2a2a2a 80%, #4a4a4a 100%); border-right: 1px solid #777; gap: 12px; position: relative; }
.w-name { width: 85px; }
.w-status { width: 57px; }
.w-parent { width: 90px; }
.w-rest { flex: 1; border-right: 0; }
.flt { flex: none; margin-top: -3px; }
.timer { position: absolute; left: 13px; top: 536px; width: 72px; height: 72px; border-radius: 50%; border: 4px solid #e8f4fc; background: linear-gradient(160deg, #2f7ff0 0%, #4699f4 55%, #6fc2ff 100%); color: #f2f8ff; font-size: 20px; display: flex; align-items: center; justify-content: center; box-shadow: 0 3px 6px rgba(80, 130, 180, .3); }
.d-strip { padding: 0 0 4px 7px; font-size: 16px; background: #f5f6fb; height: 32px; margin-top: 0; width: 330px; }
.s-sim { margin-left: 12px; padding-right: 10px; border-right: 1px solid #334; height: 28px; line-height: 28px; color: #222; }
.s-map { margin-left: 4px; }
.s-des { margin-left: 10px; padding-right: 11px; border-right: 1px solid #334; height: 28px; line-height: 28px; color: #3f5f7f; }

.e-head { padding-left: 5px; overflow: hidden; }
.e-body { height: 699px; flex: none; position: relative; background: #fbfcfd; padding-top: 5px; }
.e-btn { margin-left: 40px; width: 60px; height: 25px; border: 1px solid #d6d6d6; background: #f2f2f2; }
.e-box { border: 1px solid #c6c9cc; border-right: 0; background: #fff; }
.e-box.one { height: 330px; margin-top: 9px; }
.e-box.two { height: 323px; margin-top: 5px; }
.e-strip { font-family: "Noto Sans CJK SC", sans-serif; font-size: 17px; gap: 18px; padding: 0 0 7px 14px; color: #333; }

/* status */
.status { height: 45px; flex: none; background: #2c5c85; display: flex; align-items: center; position: relative; color: #f0f5f9; font-family: "Noto Sans CJK SC", sans-serif; font-size: 15.400px; white-space: nowrap; }
.st-text { width: 836px; flex: none; margin-left: -3px; }
.st-cell { height: 37px; border-left: 1px solid #8aa6bc; flex: none; display: flex; align-items: center; }
.c1 { width: 153px; }
.c2 { width: 54px; padding-left: 10px; gap: 8px; }
.c3 { width: 153px; }
.st-tools { border-left: 1px solid #8aa6bc; height: 37px; flex: 1; display: flex; align-items: center; padding-left: 233px; }
.up { width: 0; height: 0; border-left: 5px solid transparent; border-right: 5px solid transparent; border-bottom: 5px solid #fff; flex: none; }
.t-sp { margin-right: 11px; margin-left: 0; }
.t-a { margin-right: 10px; }
.t-b { margin-right: 11px; }
.st-tools .up + svg { margin-left: 12px; }
.t-c { margin-right: 8px; }
.t-sep { width: 1px; height: 36px; background: #8aa6bc; margin: 0 5px 0 3px; flex: none; }
.t-d { margin-right: 6px; margin-left: 0; }
.st-tools .up + .t-e { margin-left: 14px; }
.t-e { margin-right: 11px; }
.t-f { margin-right: 5px; }

/* taskbar */
.taskbar { height: 60px; flex: none; background: linear-gradient(90deg, #22333f 0%, #1f3040 50%, #1a2a3e 100%); display: flex; justify-content: space-between; color: #f0f4f8; position: relative; overflow: hidden; }
.tk { display: flex; }
.tb { height: 60px; display: flex; align-items: center; justify-content: center; position: relative; flex: none; }
.tb.on::after { content: ""; position: absolute; left: 0; right: 0; bottom: 0; height: 3px; background: #7ab0de; }
.tb.inset::after { left: 7px; right: 7px; }
.w48 { width: 55px; justify-content: flex-start; }
.w48::after { right: 7px !important; }
.w75 { width: 75px; }
.w-t1 { width: 74px; margin-left: 1px; }
.w-t2 { width: 73px; margin-left: 1px; }
.tile { background: #304552; }
.tile2 { background: #4d6370; }
.dev { position: absolute; left: 25px; bottom: 11px; width: 26px; text-align: center; font-size: 10px; font-weight: 700; color: #143a08; font-family: "Liberation Sans", sans-serif; }
.sv5 { position: absolute; left: 19px; top: 18px; width: 36px; text-align: center; font-size: 19px; font-weight: 700; color: #f6efd8; font-family: "Liberation Sans", sans-serif; }
.tray { display: flex; align-items: center; font-family: "Noto Sans CJK SC", sans-serif; white-space: nowrap; flex: none; margin-right: -8px; }
.temp { font-size: 21px; font-family: "Liberation Sans", sans-serif; margin-left: 9px; }
.wx { font-size: 20.500px; margin-left: 12px; }
.caret { margin-left: 42px; }
.mic { margin-left: 19px; }
.net { margin-left: 18px; }
.vol { margin-left: 11px; }
.ime { font-size: 24px; margin-left: 12px; }
.pin-yin { width: 22px; height: 22px; background: #fff; color: #111; font-size: 18px; line-height: 22px; text-align: center; margin-left: 20px; }
.clock { margin-left: 23px; text-align: center; font-size: 20px; line-height: 27px; font-family: "Liberation Sans", sans-serif; width: 100px; }
.date { letter-spacing: .2px; }
```
